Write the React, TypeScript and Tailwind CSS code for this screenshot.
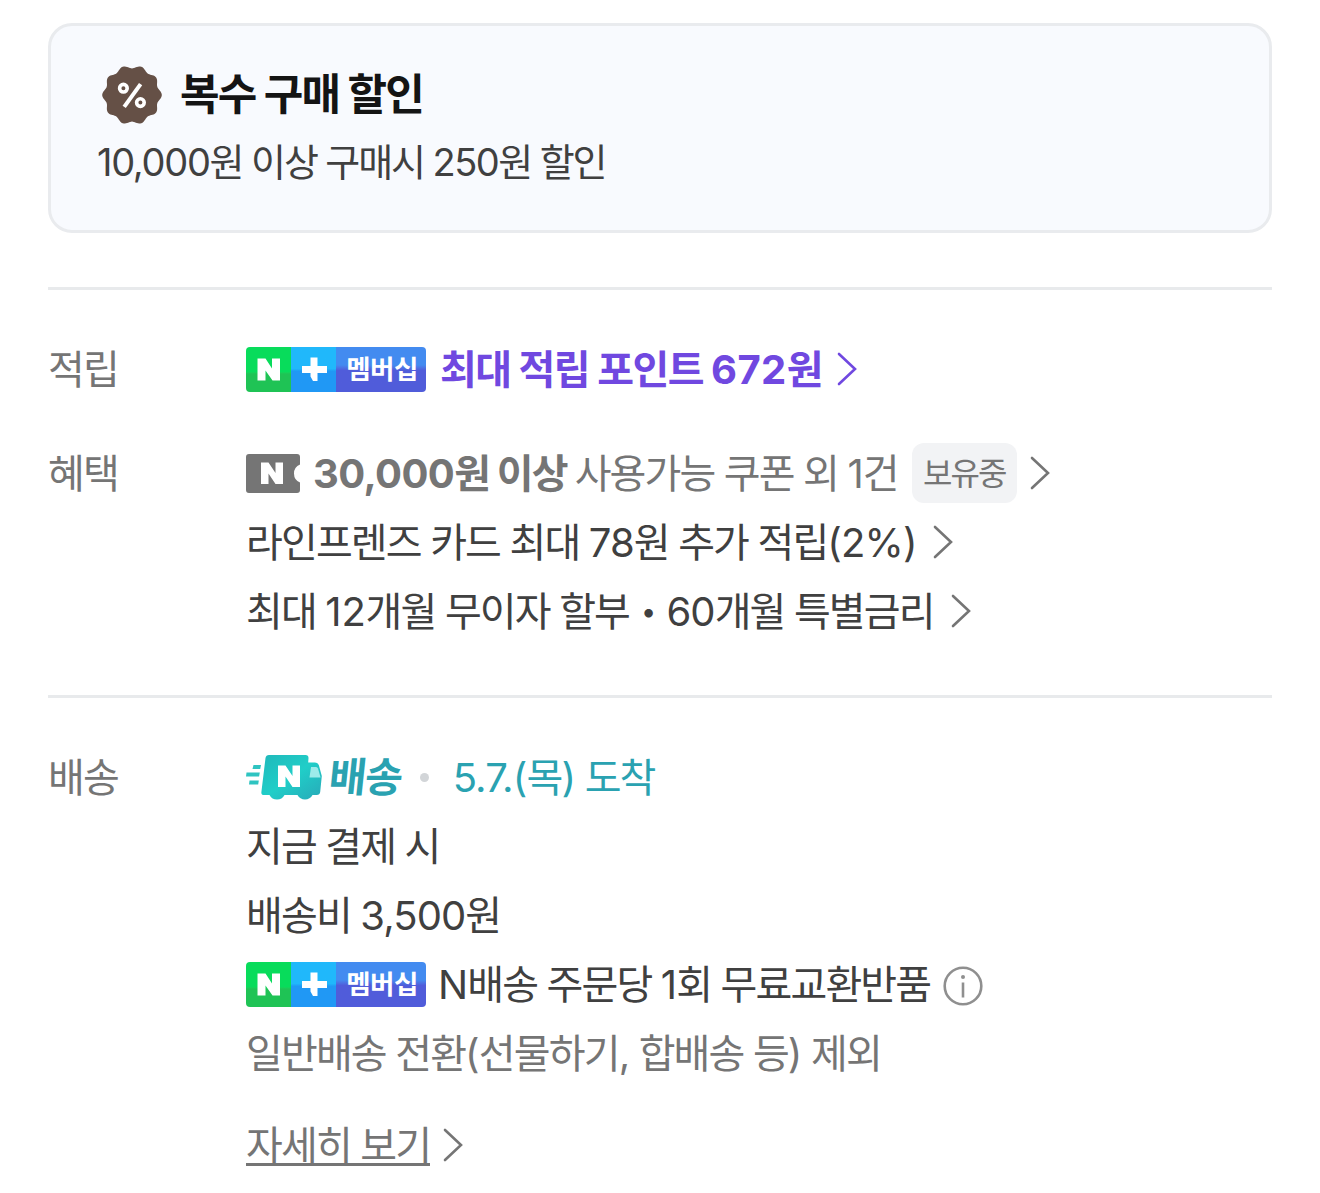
import type { ReactNode } from "react";
import clsx from "clsx";

const badgePoints = Array.from({ length: 180 }, (_, i) => {
  const angle = (i / 180) * Math.PI * 2;
  const radius = 28.2 + 1.6 * Math.cos(angle * 10);
  return `${(30 + radius * Math.cos(angle)).toFixed(2)},${(30 + radius * Math.sin(angle)).toFixed(2)}`;
}).join(" ");

function DiscountBadge() {
  return (
    <svg width="60" height="60" viewBox="0 0 60 60" className="shrink-0">
      <polygon points={badgePoints} fill="#655046" />
      <g fill="none" stroke="#fff" strokeWidth="3.6">
        <circle cx="21.4" cy="23.2" r="3.8" />
        <circle cx="38.4" cy="37.6" r="3.8" />
        <path d="M38.6 19.2 22.2 41.8" strokeWidth="4" />
      </g>
    </svg>
  );
}

function ChevronRight({ className }: { className?: string }) {
  return (
    <svg
      width="20"
      height="34"
      viewBox="0 0 20 34"
      fill="none"
      stroke="currentColor"
      strokeWidth="2.6"
      strokeLinecap="round"
      className={clsx("mb-0.5 shrink-0", className)}
    >
      <path d="M2 2 18 17 2 32" />
    </svg>
  );
}

function MembershipBadge() {
  return (
    <span className="flex h-[45px] w-[180px] shrink-0 overflow-hidden rounded-[4px] text-white">
      <span className="flex w-[45px] bg-linear-to-b from-[#08dc5b] from-55% to-[#1fc355] to-60%">
        <svg width="45" height="45" viewBox="0 0 45 45">
          <path d="M11.5 11.5h8l6.5 10v-10h8v22h-7.5l-7-10v10h-8z" fill="#fff" />
        </svg>
      </span>
      <span className="flex w-[45px] bg-linear-to-b from-[#20b8fb] from-48% to-[#2098f5] to-54%">
        <svg width="45" height="45" viewBox="0 0 45 45">
          <path d="M19.5 10.5h7V19H36v7h-9.500v8h-4.500l-2.500-4.500V26H11v-7h8.500z" fill="#fff" />
        </svg>
      </span>
      <span className="flex w-[90px] items-center justify-center bg-linear-to-b from-[#438bf0] from-40% to-[#505cda] to-52% pl-0.5 text-[26.5px] leading-none font-bold tracking-[-0.6px]">
        멤버십
      </span>
    </span>
  );
}

function CouponIcon() {
  return (
    <svg width="54" height="39" viewBox="0 0 54 39" className="shrink-0">
      <path
        d="M3 0h48a3 3 0 0 1 3 3v7.5q-6 2.500-6 9t6 9V36a3 3 0 0 1-3 3H3a3 3 0 0 1-3-3V3a3 3 0 0 1 3-3z"
        fill="#757575"
      />
      <path d="M15 8.500h7.500l7 10.500V8.500H37V30h-7.500l-7-10.500V30H15z" fill="#fff" />
    </svg>
  );
}

function TruckIcon() {
  return (
    <svg width="76" height="46" viewBox="0 0 76 46" className="shrink-0">
      <defs>
        <linearGradient id="truck" x1="0" y1="0" x2="1" y2="1">
          <stop offset="0" stopColor="#20b8ba" />
          <stop offset="0.5" stopColor="#20cec8" />
          <stop offset="1" stopColor="#28a9b8" />
        </linearGradient>
      </defs>
      <path
        d="M7.5 10H15l-.8 4H6.5zM.5 17.5h13.3l-.7 4H0zM3.500 25.500h9.300l-.6 4H3z"
        fill="#2fc4c1"
      />
      <path
        d="M23 0h36.500a3 3 0 0 1 3 3l-.3 4.500H69q3 0 3.800 2.500l3 11-1.600 16q-.4 3-3.500 3H66.500a8.500 8.500 0 0 1-15 0H38.500a8.500 8.500 0 0 1-15 0H18q-3 0-2.600-3L19.500 3q.5-3 3.500-3z"
        fill="url(#truck)"
      />
      <path d="M65 12h5q1.500 0 2 1.500l2.600 9H63.500z" fill="#9cebea" />
      <path d="M32 10.500h7.500l7 10.500V10.500H54V32h-7.500l-7-10.500V32H32z" fill="#fff" />
    </svg>
  );
}

function InfoIcon() {
  return (
    <svg width="40" height="40" viewBox="0 0 40 40" fill="none" className="mt-0.5 shrink-0">
      <circle cx="20" cy="20" r="18.3" stroke="#8f8f8f" strokeWidth="2.6" />
      <circle cx="20" cy="11" r="2" fill="#8f8f8f" />
      <path d="M20 16.500v15" stroke="#8f8f8f" strokeWidth="2.6" />
    </svg>
  );
}

// Latin digits are set looser than the Hangul around them
function Num({ children }: { children: ReactNode }) {
  return <span className="tracking-[-0.9px]">{children}</span>;
}

function Section({ label, children }: { label: string; children: ReactNode }) {
  return (
    <div className="flex">
      <div className="flex h-[69px] w-[198px] shrink-0 items-center pt-0.5 text-[#757575]">
        {label}
      </div>
      <div>{children}</div>
    </div>
  );
}

function Row({ className, children }: { className?: string; children: ReactNode }) {
  return <div className={clsx("flex h-[69px] items-center pt-0.5", className)}>{children}</div>;
}

export default function App() {
  return (
    <div className="h-[1193px] w-[1320px] overflow-hidden bg-white px-12 pt-[23px] font-['Inter','Noto_Sans_CJK_KR',sans-serif] text-[40px] leading-none font-normal tracking-[-1.85px] whitespace-nowrap text-[#404040]">
      <div className="h-[210px] rounded-[24px] border-3 border-[#e9ebee] bg-[#f8fafe] pt-[39px] pl-[46px]">
        <div className="flex h-[60px] items-center pl-[5px]">
          <DiscountBadge />
          <span className="ml-[18px] pb-0.5 text-[43px] font-bold text-[#141414]">
            복수 구매 할인
          </span>
        </div>
        <div className="mt-[7px] flex h-[60px] items-center text-[38px] tracking-[-2.1px]">
          <span>
            <span className="tracking-[-1.3px]">10,000</span>원 이상 구매시{" "}
            <span className="tracking-[-1.5px]">250</span>원 할인
          </span>
        </div>
      </div>

      <div className="mt-[54px] border-t-3 border-[#e8eaec] pt-[44px]">
        <Section label="적립">
          <Row className="text-[#7048e0]">
            <MembershipBadge />
            <span className="ml-[14px] font-bold tracking-[-1.500px]">
              최대 적립 포인트 <span className="tracking-[0.4px]">672</span>원
            </span>
            <ChevronRight className="ml-[15px]" />
          </Row>
        </Section>
        <div className="h-[35px]" />
        <Section label="혜택">
          <Row className="text-[#757575]">
            <CouponIcon />
            <span className="ml-[13px] font-bold">
              <span className="tracking-[-0.6px]">30,000</span>원 이상
            </span>
            <span className="ml-[8px]">
              사용가능 쿠폰 외 <Num>1</Num>건
            </span>
            <span className="mb-0.5 ml-[14px] flex h-[60px] w-[105px] items-center justify-center rounded-[12px] bg-[#f2f3f5] pt-0.5 text-[32px]">
              보유중
            </span>
            <ChevronRight className="ml-[13px]" />
          </Row>
          <Row>
            <span>
              라인프렌즈 카드 최대 <Num>78</Num>원 추가 적립<Num>(2%)</Num>
            </span>
            <ChevronRight className="ml-4 text-[#757575]" />
          </Row>
          <Row>
            <span>
              최대 <span className="tracking-[-0.2px]">12</span>개월 무이자 할부
            </span>
            <span className="mx-3 text-[27px]">•</span>
            <span>
              <Num>60</Num>개월 특별금리
            </span>
            <ChevronRight className="ml-[17px] text-[#757575]" />
          </Row>
        </Section>
      </div>

      <div className="mt-[50px] border-t-3 border-[#e8eaec] pt-[44px]">
        <Section label="배송">
          <Row className="text-[#2aa2b1]">
            <TruckIcon />
            <span className="ml-[7px] -skew-x-6 text-[41px] font-bold tracking-[-1.4px]">배송</span>
            <span className="ml-[18px] size-[9px] rounded-full bg-[#d2d5d8]" />
            <span className="ml-[24px]">
              <span className="tracking-[-0.8px]">5.7.(</span>목<Num>)</Num> 도착
            </span>
          </Row>
          <Row>지금 결제 시</Row>
          <Row>
            <span>
              배송비 <Num>3,500</Num>원
            </span>
          </Row>
          <Row>
            <MembershipBadge />
            <span className="ml-[12px]">
              <Num>N</Num>배송 주문당 <Num>1</Num>회 무료교환반품
            </span>
            <span className="ml-[13px]">
              <InfoIcon />
            </span>
          </Row>
          <Row className="text-[#757575]">
            <span>
              일반배송 전환<Num>(</Num>선물하기<Num>,</Num> 합배송 등<Num>)</Num> 제외
            </span>
          </Row>
          <Row className="mt-[23px] text-[#757575]">
            <span className="mt-1 border-b-3 border-[#757575] leading-[34px]">자세히 보기</span>
            <ChevronRight className="ml-[13px]" />
          </Row>
        </Section>
      </div>
    </div>
  );
}
